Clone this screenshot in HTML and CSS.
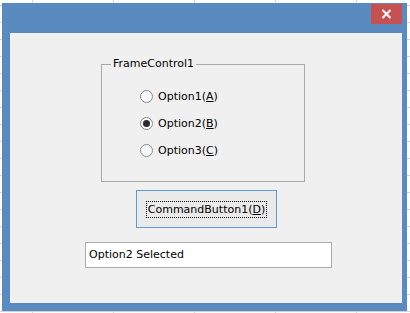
FILE: index.html
```html
<!DOCTYPE html>
<html lang="en">

<head>
  <meta charset="UTF-8">
  <title>UserForm1</title>
  <link rel="stylesheet" href="styles.css">
</head>

<body>

  <!-- UserForm window -->
  <div class="window">
    <div class="title-bar">
      <button class="close-btn" aria-label="Close">
        <svg width="11" height="10" viewBox="0 0 11 10">
          <path d="M1.5 1 L9.5 9 M9.5 1 L1.5 9" stroke="#fff" stroke-width="2" fill="none" />
        </svg>
      </button>
    </div>

    <div class="client">
      <div class="frame">
        <span class="frame-title">FrameControl1</span>
        <div class="radio-list">
          <label class="radio-row"><span class="radio"></span><span>Option1(<u>A</u>)</span></label>
          <label class="radio-row"><span class="radio checked"></span><span>Option2(<u>B</u>)</span></label>
          <label class="radio-row"><span class="radio"></span><span>Option3(<u>C</u>)</span></label>
        </div>
      </div>

      <button class="command-btn"><span class="focus-rect">CommandButton1(<u>D</u>)</span></button>

      <div class="textbox">Option2 Selected</div>
    </div>
  </div>

</body>

</html>
```

FILE: styles.css
```css
/* Reset */
* {
  margin: 0;
  padding: 0;
  box-sizing: border-box;
}

body {
  width: 410px;
  height: 313px;
  overflow: hidden;
  font-family: 'DejaVu Sans', Tahoma, sans-serif;
  font-size: 11px;
  color: #000;
  background-color: #fff;
  background-image:
    repeating-linear-gradient(to right, transparent 0, transparent 32px, #d4d4d4 32px, #d4d4d4 33px, transparent 33px, transparent 81px),
    repeating-linear-gradient(to bottom, transparent 0, transparent 5px, #d4d4d4 5px, #d4d4d4 6px, transparent 6px, transparent 17px);
}

/* Window chrome */
.window {
  width: 405px;
  height: 308px;
  margin: 3px 0 0 2px;
  background-color: #5a8bc0;
  display: flex;
  flex-direction: column;
}

.title-bar {
  height: 30px;
  padding: 1px 5px 0 0;
  display: flex;
  justify-content: flex-end;
  align-items: flex-start;
}

.close-btn {
  width: 31px;
  height: 20px;
  border: none;
  background-color: #c75050;
  display: flex;
  align-items: center;
  justify-content: center;
}

.client {
  height: 270px;
  margin: 0 5px 0 8px;
  padding-top: 31px;
  background-color: #f0f0f0;
  display: flex;
  flex-direction: column;
  align-items: flex-start;
}

/* Frame control */
.frame {
  position: relative;
  width: 204px;
  height: 118px;
  margin-left: 91px;
  border: 1px solid #a8a8a8;
}

.frame-title {
  position: absolute;
  top: -8px;
  left: 9px;
  padding: 0 2px;
  line-height: 13px;
  background-color: #f0f0f0;
}

.radio-list {
  display: flex;
  flex-direction: column;
  gap: 14px;
  padding: 25px 0 0 38px;
}

.radio-row {
  display: flex;
  align-items: center;
  gap: 5px;
  height: 13px;
  line-height: 13px;
}

.radio {
  width: 13px;
  height: 13px;
  border: 1px solid #8a8a8a;
  border-radius: 50%;
  background: linear-gradient(#f6f6f6, #fdfdfd);
  display: flex;
  align-items: center;
  justify-content: center;
}

.radio.checked::after {
  content: '';
  width: 7px;
  height: 7px;
  border-radius: 50%;
  background-color: #2b2b2b;
}

/* Command button */
.command-btn {
  width: 141px;
  height: 38px;
  margin: 8px 0 0 126px;
  border: 1px solid #5e9ad6;
  background-color: #eaeaea;
  font-family: inherit;
  font-size: 11px;
  color: #000;
  display: flex;
  align-items: center;
  justify-content: center;
}

.focus-rect {
  padding: 0 1px;
  line-height: 15px;
  border: 1px dotted #000;
}

/* Text box */
.textbox {
  width: 247px;
  height: 26px;
  margin: 14px 0 0 75px;
  padding-left: 3px;
  border: 1px solid #ababab;
  background-color: #fff;
  line-height: 24px;
}
```
